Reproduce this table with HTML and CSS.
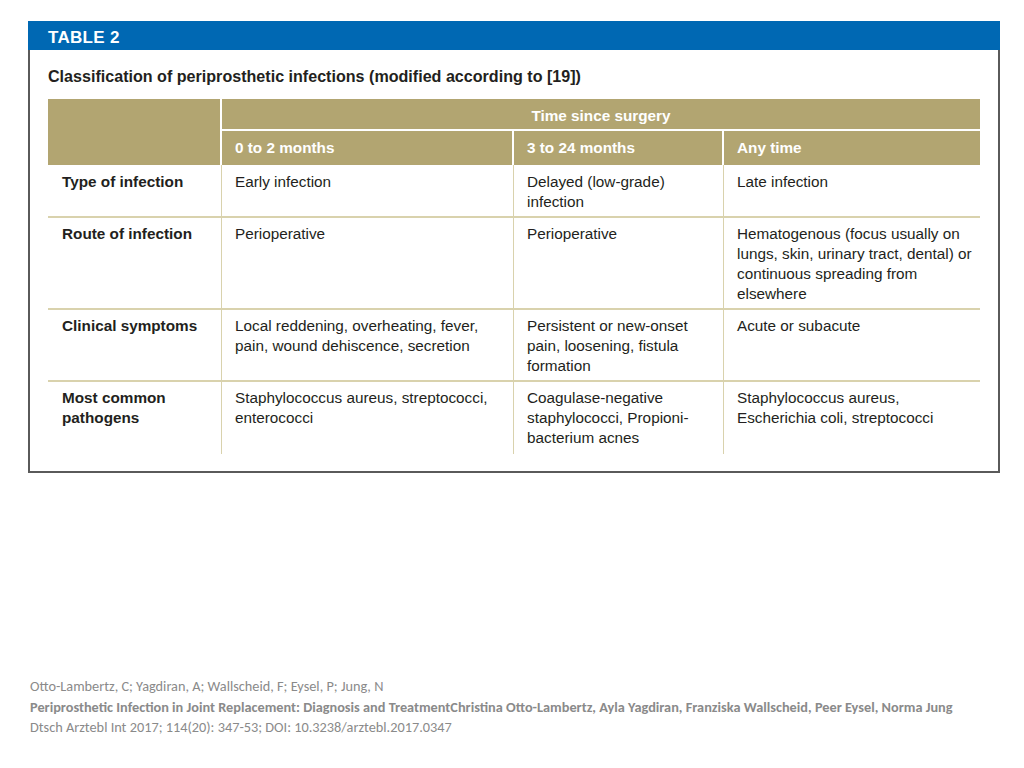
FILE: index.html
```html
<!DOCTYPE html>
<html lang="en">
<head>
<meta charset="utf-8">
<title>Table 2</title>
<link rel="stylesheet" href="styles.css">
</head>
<body>
<div class="card">
  <div class="card-head">TABLE 2</div>
  <div class="card-body">
    <h1 class="title">Classification of periprosthetic infections (modified according to [19])</h1>
    <div class="grid">
      <div class="h h-corner"></div>
      <div class="h h-span">Time since surgery</div>
      <div class="h h-sub">0 to 2 months</div>
      <div class="h h-sub">3 to 24 months</div>
      <div class="h h-sub last">Any time</div>

      <div class="c lbl first">Type of infection</div>
      <div class="c first">Early infection</div>
      <div class="c first">Delayed (low-grade)<br>infection</div>
      <div class="c first last">Late infection</div>

      <div class="c lbl">Route of infection</div>
      <div class="c">Perioperative</div>
      <div class="c">Perioperative</div>
      <div class="c last">Hematogenous (focus usually on<br>lungs, skin, urinary tract, dental) or<br>continuous spreading from<br>elsewhere</div>

      <div class="c lbl">Clinical symptoms</div>
      <div class="c">Local reddening, overheating, fever, pain, wound dehiscence, secretion</div>
      <div class="c">Persistent or new-onset<br>pain, loosening, fistula<br>formation</div>
      <div class="c last">Acute or subacute</div>

      <div class="c lbl bottom">Most common<br>pathogens</div>
      <div class="c bottom">Staphylococcus aureus, streptococci, enterococci</div>
      <div class="c bottom">Coagulase-negative<br>staphylococci, Propioni-<br>bacterium acnes</div>
      <div class="c bottom last">Staphylococcus aureus,<br>Escherichia coli, streptococci</div>
    </div>
  </div>
</div>
<div class="footer">
  <div>Otto-Lambertz, C; Yagdiran, A; Wallscheid, F; Eysel, P; Jung, N</div>
  <div class="bold">Periprosthetic Infection in Joint Replacement: Diagnosis and TreatmentChristina Otto-Lambertz, Ayla Yagdiran, Franziska Wallscheid, Peer Eysel, Norma Jung</div>
  <div>Dtsch Arztebl Int 2017; 114(20): 347-53; DOI: 10.3238/arztebl.2017.0347</div>
</div>
</body>
</html>
```
FILE: styles.css
```css
* { box-sizing: border-box; }
html, body { margin: 0; padding: 0; background: #ffffff; }
body { font-family: "Liberation Sans", Arial, sans-serif; color: #231f20; }

.card {
  margin: 21px 0 0 28px;
  width: 972px;
}
.card-head {
  height: 29px;
  background: #0068b3;
  color: #ffffff;
  font-weight: bold;
  font-size: 17px;
  letter-spacing: 0.3px;
  line-height: 26px;
  padding-left: 20px;
  padding-top: 4px;
}
.card-body {
  border: 2px solid #5a5a5a;
  border-top: 0;
  height: 423px;
  padding: 16px 18px 0;
}
.title {
  margin: 0 0 13px;
  font-size: 16.1px;
  line-height: 20px;
  font-weight: bold;
  color: #231f20;
}
.grid {
  display: grid;
  grid-template-columns: 174px 292px 210px 256px;
  font-size: 15.3px;
  line-height: 20px;
}
.h {
  background: #b2a571;
  color: #ffffff;
  font-weight: bold;
  padding: 0 14px;
}
.h-corner {
  grid-row: 1 / span 2;
  border-right: 2px solid #ffffff;
}
.h-span {
  grid-column: 2 / span 3;
  text-align: center;
  padding: 7px 0 3px;
  border-bottom: 2px solid #ffffff;
}
.h-sub {
  padding: 7px 13px;
  border-right: 2px solid #ffffff;
}
.h-sub.last { border-right: 0; }
.c {
  padding: 6px 13px 4px;
  border-top: 2px solid #d9d2ad;
  border-right: 1.5px solid #d9d2ad;
}
.c.first { border-top: 0; padding-top: 7px; }
.c.last { border-right: 0; padding-right: 0; white-space: nowrap; }
.c.bottom { padding-bottom: 6px; }
.lbl { font-weight: bold; padding-left: 14px; }

.footer {
  margin: 203px 0 0 30px;
  font-family: Carlito, Lato, "Open Sans", sans-serif;
  font-size: 14.3px;
  line-height: 20.5px;
  color: #8a8a8a;
}
.footer .bold { font-weight: bold; }
```
